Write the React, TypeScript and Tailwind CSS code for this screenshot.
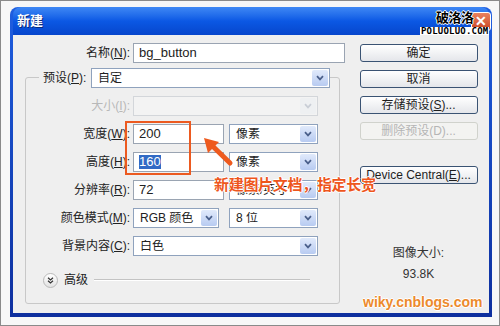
import type { ReactNode } from "react";

const FONT = "font-['Liberation_Sans','Noto_Sans_CJK_SC',sans-serif]";

function Chevron({ disabled }: { disabled?: boolean }) {
  return (
    <span
      className={`m-[1px] flex h-[16px] w-[16px] items-center justify-center rounded-[2px] ${
        disabled ? "bg-[#eef0f2]" : "bg-gradient-to-b from-[#e1eafb] to-[#b8cbf1]"
      }`}
    >
      <svg width="8" height="6" viewBox="0 0 8 6">
        <path
          d="M1 1.2 L4 4.4 L7 1.2"
          stroke={disabled ? "#c9ced6" : "#4a5f8a"}
          strokeWidth="1.7"
          fill="none"
        />
      </svg>
    </span>
  );
}

function Select({ value, w, disabled }: { value?: string; w: string; disabled?: boolean }) {
  return (
    <div
      className={`flex h-[20px] items-center border ${
        disabled ? "border-[#d3d6da] bg-[#f3f3f3]" : "border-[#8fa2bd] bg-white"
      } ${w}`}
    >
      <span className="flex-1 truncate pl-[6px] text-[12px] leading-none text-[#222]">{value}</span>
      <Chevron disabled={disabled} />
    </div>
  );
}

function Field({ children, w }: { children?: ReactNode; w: string }) {
  return (
    <div className={`flex h-[20px] items-center border border-[#9aa4b2] bg-white pl-[5px] text-[13px] text-[#222] ${w}`}>
      {children}
    </div>
  );
}

function Label({ text, k, w }: { text: string; k: string; w: string }) {
  return (
    <span className={`shrink-0 pr-[3px] text-right text-[12px] text-[#222] ${w}`}>
      {text}(<span className="underline">{k}</span>):
    </span>
  );
}

function Btn({ children, disabled }: { children: ReactNode; disabled?: boolean }) {
  return (
    <div
      className={`flex h-[18px] w-[118px] items-center justify-center rounded-[3px] border text-[12px] leading-none ${
        disabled
          ? "border-[#d0d2cc] bg-[#f3f3f1] text-[#b5b5b5]"
          : "border-[#3a5373] bg-gradient-to-b from-white to-[#e4e6ea] text-[#1e1e1e]"
      }`}
    >
      {children}
    </div>
  );
}

export default function App() {
  return (
    <div className={`relative h-[326px] w-[500px] overflow-hidden border border-[#8a8a8a] bg-[#f7f7f7] pb-[8px] pl-[9px] pr-[7px] pt-[6px] ${FONT}`}>
      {/* window */}
      <div className="flex h-full flex-col rounded-t-[8px] bg-gradient-to-b from-[#1f5ee0] to-[#0e2f9e] px-[3px] pb-[4px]">
        <div className="flex h-[28px] items-center rounded-t-[8px] bg-gradient-to-b from-[#3f88f4] via-[#0b58e4] to-[#0746cc] pl-[4px]">
          <span className="text-[13px] font-bold text-white [text-shadow:1px_1px_0_#0a2a7a]">新建</span>
          <span className="ml-auto mr-[-2px] flex h-[19px] w-[20px] items-center justify-center rounded-[3px] border border-white bg-gradient-to-b from-[#e98260] to-[#c9421c] text-[14px] font-bold leading-none text-white">
            ✕
          </span>
        </div>

        {/* client area */}
        <div className="flex flex-1 bg-[#efefef]">
          {/* left form */}
          <div className="flex w-[335px] flex-col">
            <div className="mt-[8px] flex items-center">
              <Label text="名称" k="N" w="w-[120px]" />
              <Field w="w-[212px]">bg_button</Field>
            </div>

            <div className="ml-[12px] mt-[14px] flex h-[227px] w-[315px] flex-col rounded-[3px] border border-[#c8c8c8]">
              <div className="-mt-[10px] flex items-center">
                <span className="ml-[13px] w-[52px] bg-[#efefef] pl-[4px] text-[12px] text-[#222]">
                  预设(<span className="underline">P</span>):
                </span>
                <Select value="自定" w="w-[239px]" />
              </div>

              <div className="mt-[8px] flex flex-col gap-[8px]">
                <div className="flex items-center">
                  <span className="w-[107px] shrink-0 pr-[3px] text-right text-[12px] text-[#b8b8b8]">
                    大小(<span className="underline">I</span>):
                  </span>
                  <Select w="w-[185px]" disabled />
                </div>
                <div className="flex items-center">
                  <Label text="宽度" k="W" w="w-[107px]" />
                  <Field w="w-[91px]">200</Field>
                  <div className="ml-[5px]">
                    <Select value="像素" w="w-[89px]" />
                  </div>
                </div>
                <div className="flex items-center">
                  <Label text="高度" k="H" w="w-[107px]" />
                  <Field w="w-[91px]">
                    <span className="bg-[#316ac5] leading-[14px] text-white">160</span>
                  </Field>
                  <div className="ml-[5px]">
                    <Select value="像素" w="w-[89px]" />
                  </div>
                </div>
                <div className="flex items-center">
                  <Label text="分辨率" k="R" w="w-[107px]" />
                  <Field w="w-[91px]">72</Field>
                  <div className="ml-[5px]">
                    <Select value="像素/英寸" w="w-[89px]" />
                  </div>
                </div>
                <div className="flex items-center">
                  <Label text="颜色模式" k="M" w="w-[107px]" />
                  <Select value="RGB 颜色" w="w-[86px]" />
                  <div className="ml-[10px]">
                    <Select value="8 位" w="w-[89px]" />
                  </div>
                </div>
                <div className="flex items-center">
                  <Label text="背景内容" k="C" w="w-[107px]" />
                  <Select value="白色" w="w-[185px]" />
                </div>
              </div>

              <div className="mt-[15px] flex items-center">
                <span className="ml-[17px] flex h-[15px] w-[15px] items-center justify-center rounded-full border border-[#b9b9b9] bg-gradient-to-b from-white to-[#e3e3e3]">
                  <svg width="7" height="7" viewBox="0 0 7 7">
                    <path d="M1 0.8 L3.5 3 L6 0.8 M1 3.8 L3.5 6 L6 3.8" stroke="#333" strokeWidth="1.2" fill="none" />
                  </svg>
                </span>
                <span className="ml-[6px] text-[12px] text-[#222]">高级</span>
                <span className="ml-[6px] mr-[29px] h-[2px] flex-1 border-t border-[#c3c3c3] bg-white" />
              </div>
            </div>
          </div>

          {/* right column */}
          <div className="flex flex-1 flex-col items-center pt-[9px]">
            <div className="flex flex-col gap-[8px]">
              <Btn>确定</Btn>
              <Btn>取消</Btn>
              <Btn>
                存储预设(<span className="underline">S</span>)...
              </Btn>
              <Btn disabled>删除预设(D)...</Btn>
              <div className="mt-[18px]">
                <Btn>
                  Device Central(<span className="underline">E</span>)...
                </Btn>
              </div>
            </div>
            <span className="mt-[63px] text-[12px] leading-[12px] text-[#333]">图像大小:</span>
            <span className="mt-[9px] text-[12px] leading-[12px] text-[#333]">93.8K</span>
          </div>
        </div>
      </div>

      {/* annotation overlay */}
      <div className="absolute left-[124px] top-[120px] h-[54px] w-[66px] border-2 border-[#ec5a20]" />
      <svg className="absolute left-[195px] top-[130px]" width="45" height="40" viewBox="0 0 45 40">
        <path d="M34 32 L17.5 16" stroke="#ee5a1e" strokeWidth="5" strokeLinecap="round" />
        <path d="M8 7 L23 11 L12 22 Z" fill="#ee5a1e" />
      </svg>
      <span className="absolute left-[213px] top-[175px] text-[15px] font-bold leading-[18px] tracking-[-0.3px] text-[#ee561c] [text-shadow:1px_0_0_#fff,-1px_0_0_#fff,0_1px_0_#fff,0_-1px_0_#fff]">
        新建图片文档，指定长宽
      </span>

      {/* watermarks */}
      <span className="absolute left-[362px] top-[293px] text-[14px] font-bold leading-[16px] text-[#ec8a2c] [text-shadow:1px_0_0_#fff,-1px_0_0_#fff,0_1px_0_#fff,0_-1px_0_#fff]">
        wiky.cnblogs.com
      </span>
      <span className="absolute left-[435px] top-[9px] text-[13px] font-bold leading-[16px] tracking-[-0.5px] text-black [text-shadow:1px_0_0_#fff,-1px_0_0_#fff,0_1px_0_#fff,0_-1px_0_#fff]">
        破洛洛
      </span>
      <span className="absolute left-[419px] top-[26px] bg-white px-[1px] font-['DejaVu_Sans_Mono',monospace] text-[9px] font-bold leading-[8px] tracking-[0.2px] text-black">
        POLUOLUO.COM
      </span>
    </div>
  );
}
